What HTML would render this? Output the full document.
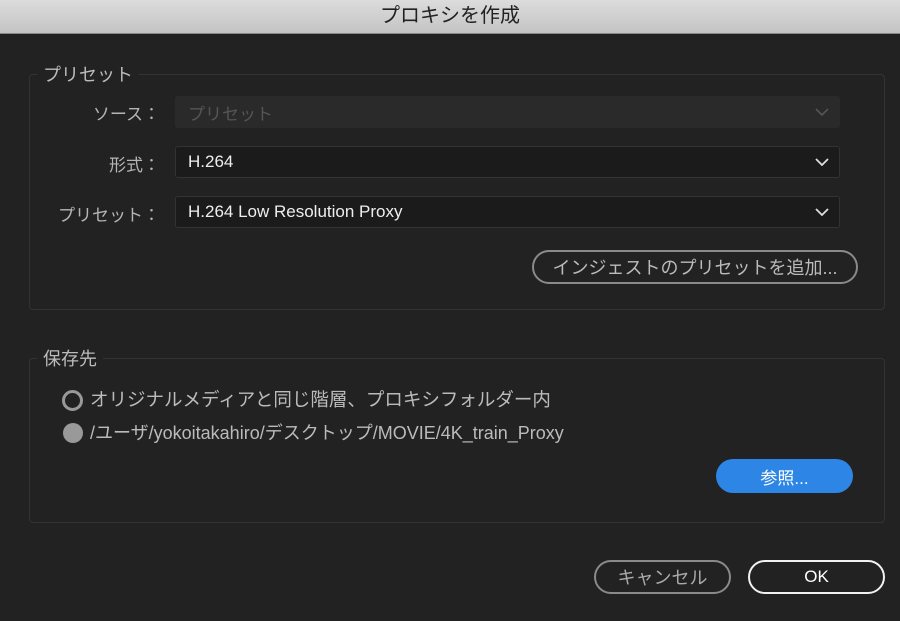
<!DOCTYPE html>
<html><head><meta charset="utf-8"><style>
*{margin:0;padding:0;box-sizing:border-box}
body{width:900px;height:621px;background:#222;position:relative;overflow:hidden;font-family:"Liberation Sans","Noto Sans CJK JP",sans-serif;color:#bdbdbd}
.t{position:absolute;left:0;top:0;width:900px;height:34px;background:linear-gradient(#dcdcdc,#c4c4c4);border-bottom:1px solid #888;text-align:center;font-size:20px;line-height:33px;color:#222}
.a{position:absolute;line-height:22px}
.g{position:absolute;border:1px solid #333;border-radius:4px}
.lg{position:absolute;background:#222;padding:0 6px;font-size:18px;line-height:24px;color:#bbb}
.lb{position:absolute;font-size:17px;line-height:22px;color:#b5b5b5;text-align:right;width:150px;left:10px}
.f{position:absolute;left:175px;width:665px;height:32px;border:1px solid #333;border-radius:3px;background:#1b1b1b;color:#eee;font-size:17px;display:flex;align-items:center;padding-left:12px}
.f svg{position:absolute;right:10px;top:11px}
.b{position:absolute;border-radius:17px;display:flex;align-items:center;justify-content:center;font-size:17px}
</style></head><body>
<div class="t">プロキシを作成</div>
<div class="g" style="left:29px;top:74px;width:856px;height:236px"></div>
<div class="lg" style="left:37px;top:63px">プリセット</div>
<div class="lb" style="top:104px">ソース：</div>
<div class="f" style="top:96px;background:#2a2a2a;border-color:#2a2a2a;color:#555">プリセット<svg width="14" height="8"><path d="M1 1l6 6 6-6" stroke="#555" stroke-width="1.6" fill="none"/></svg></div>
<div class="lb" style="top:155px">形式：</div>
<div class="f" style="top:146px">H.264<svg width="14" height="8"><path d="M1 1l6 6 6-6" stroke="#ddd" stroke-width="1.8" fill="none"/></svg></div>
<div class="lb" style="top:205px">プリセット：</div>
<div class="f" style="top:196px">H.264 Low Resolution Proxy<svg width="14" height="8"><path d="M1 1l6 6 6-6" stroke="#ddd" stroke-width="1.8" fill="none"/></svg></div>
<div class="b" style="left:532px;top:250px;width:326px;height:34px;border:2px solid #8a8a8a;color:#bbb;font-size:18px">インジェストのプリセットを追加...</div>
<div class="g" style="left:29px;top:358px;width:856px;height:165px"></div>
<div class="lg" style="left:37px;top:347px">保存先</div>
<div class="a" style="left:62px;top:390px;width:21px;height:21px;border:3px solid #999;border-radius:50%"></div>
<div class="a" style="left:90px;top:389px;font-size:18.5px;color:#bbb">オリジナルメディアと同じ階層、プロキシフォルダー内</div>
<div class="a" style="left:63px;top:423px;width:20px;height:20px;background:#999;border-radius:50%"></div>
<div class="a" style="left:90px;top:422px;font-size:18px;color:#bbb">/ユーザ/yokoitakahiro/デスクトップ/MOVIE/4K_train_Proxy</div>
<div class="b" style="left:716px;top:459px;width:137px;height:34px;background:#2d86e6;color:#fff">参照...</div>
<div class="b" style="left:594px;top:560px;width:137px;height:34px;border:2px solid #8a8a8a;color:#aaa;font-size:18px">キャンセル</div>
<div class="b" style="left:748px;top:560px;width:137px;height:34px;border:2px solid #f2f2f2;color:#fff">OK</div>
</body></html>
